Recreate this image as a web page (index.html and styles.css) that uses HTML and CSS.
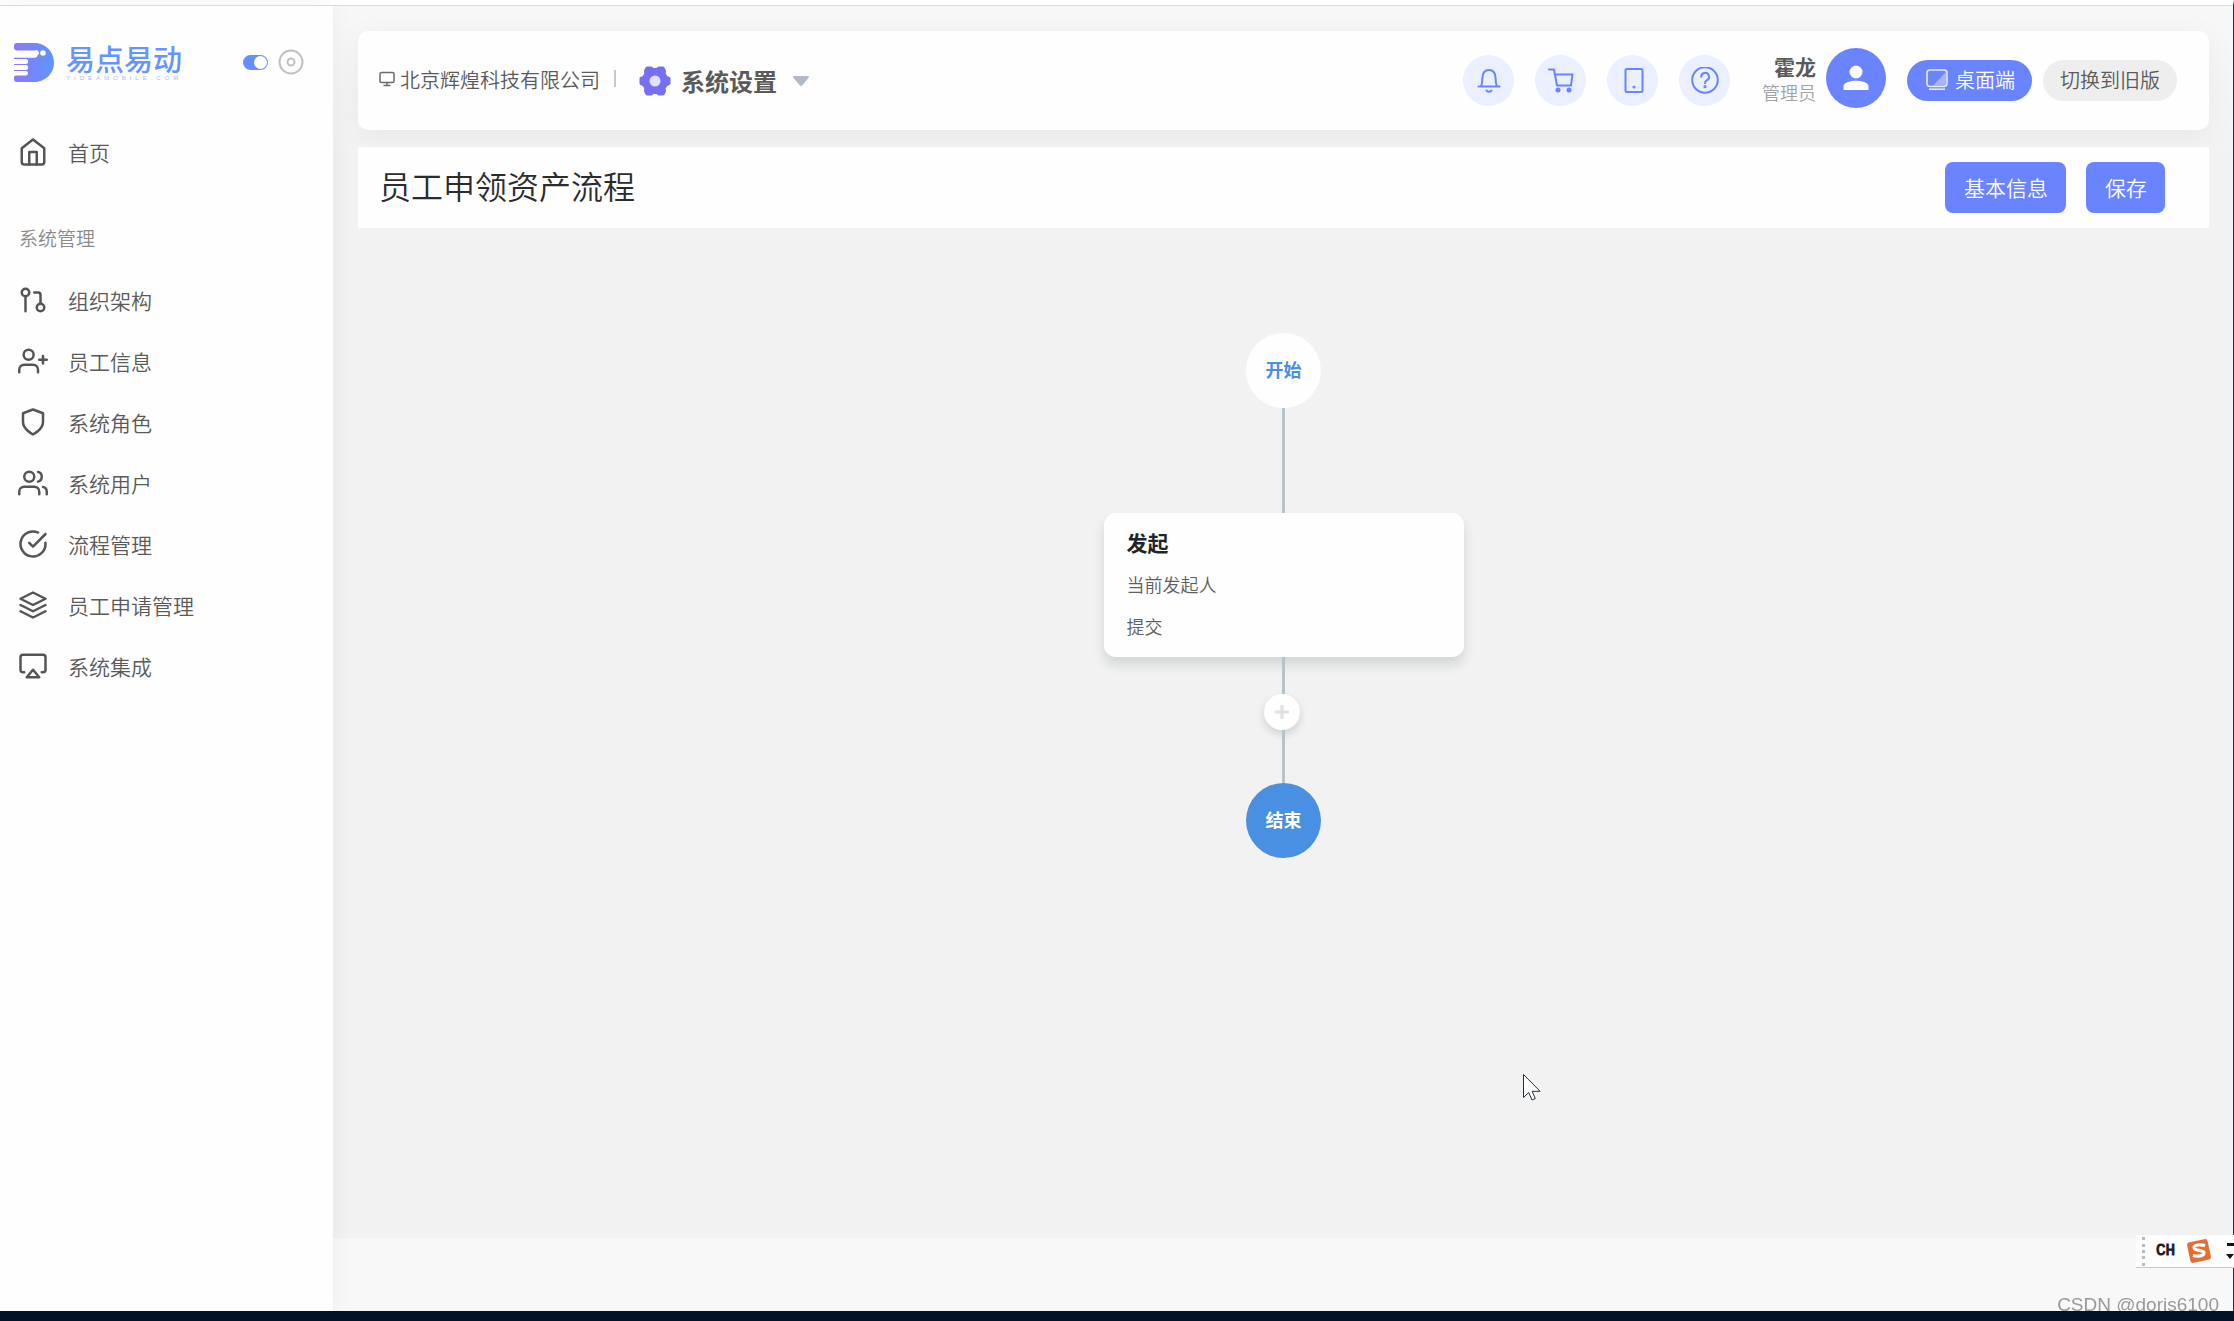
FILE: index.html
```html
<!DOCTYPE html>
<html lang="zh-CN">
<head>
<meta charset="utf-8">
<title>员工申领资产流程</title>
<link rel="stylesheet" href="styles.css">
</head>
<body>
<div class="app">
  <aside class="sidebar">
    <div class="brand">
      <svg class="brand-mark" viewBox="0 0 40 39" aria-hidden="true">
        <defs><linearGradient id="mark" x1="0" x2="1"><stop offset="0" stop-color="#8b78f6"/><stop offset="1" stop-color="#5c96ff"/></linearGradient></defs>
        <path fill="url(#mark)" d="M3 0H20C31 0 40 8 40 19.500S31 39 20 39H3a3 3 0 0 1-3-3v-1.500a2 2 0 0 1 2-2h10a2.500 2.500 0 0 0 2-2.500a2 2 0 0 0-2-2H0v-1h12a2 2 0 0 0 2-2.500a2 2 0 0 0-2-2.500H0v-1h12a2 2 0 0 0 2-2.500a2 2 0 0 0-2-2.500H0v-1.200h21a2.700 2.700 0 0 0 2.500-2.500A2.700 2.700 0 0 0 21 7.500H3A3 3 0 0 1 0 4.500V3a3 3 0 0 1 3-3z"/>
        <circle cx="29" cy="10" r="2.800" fill="#fff"/>
      </svg>
      <div class="brand-text"><span class="brand-name">易点易动</span><span class="brand-url">YIDEAMOBILE.COM</span></div>
      <input class="switch" type="checkbox" checked aria-label="固定菜单">
      <button class="target" aria-label="收起菜单"><svg viewBox="0 0 26 26"><circle cx="13" cy="13" r="11.500"/><circle cx="13" cy="13" r="3.500"/></svg></button>
    </div>
    <nav class="menu">
      <a class="menu-item" href="#"><svg class="icon" viewBox="0 0 24 24"><path d="M3 9l9-7 9 7v11a2 2 0 0 1-2 2H5a2 2 0 0 1-2-2z"/><path d="M9 22V12h6v10"/></svg>首页</a>
      <h2 class="menu-title">系统管理</h2>
      <a class="menu-item" href="#"><svg class="icon" viewBox="0 0 24 24"><circle cx="18" cy="18" r="3"/><circle cx="6" cy="6" r="3"/><path d="M13 6h3a2 2 0 0 1 2 2v7M6 9v12"/></svg>组织架构</a>
      <a class="menu-item" href="#"><svg class="icon" viewBox="0 0 24 24"><path d="M16 21v-2a4 4 0 0 0-4-4H5a4 4 0 0 0-4 4v2"/><circle cx="8.500" cy="7" r="4"/><path d="M20 8v6M23 11h-6"/></svg>员工信息</a>
      <a class="menu-item" href="#"><svg class="icon" viewBox="0 0 24 24"><path d="M12 22s8-4 8-10V5l-8-3-8 3v7c0 6 8 10 8 10z"/></svg>系统角色</a>
      <a class="menu-item" href="#"><svg class="icon" viewBox="0 0 24 24"><path d="M17 21v-2a4 4 0 0 0-4-4H5a4 4 0 0 0-4 4v2"/><circle cx="9" cy="7" r="4"/><path d="M23 21v-2a4 4 0 0 0-3-3.870M16 3.130a4 4 0 0 1 0 7.750"/></svg>系统用户</a>
      <a class="menu-item" href="#"><svg class="icon" viewBox="0 0 24 24"><path d="M22 11.080V12a10 10 0 1 1-5.930-9.140"/><path d="M22 4L12 14.010l-3-3"/></svg>流程管理</a>
      <a class="menu-item" href="#"><svg class="icon" viewBox="0 0 24 24"><path d="M12 2L2 7l10 5 10-5-10-5zM2 17l10 5 10-5M2 12l10 5 10-5"/></svg>员工申请管理</a>
      <a class="menu-item" href="#"><svg class="icon" viewBox="0 0 24 24"><path d="M5 17H4a2 2 0 0 1-2-2V5a2 2 0 0 1 2-2h16a2 2 0 0 1 2 2v10a2 2 0 0 1-2 2h-1"/><path d="M12 15l5 6H7z"/></svg>系统集成</a>
    </nav>
  </aside>

  <main class="main">
    <div class="workspace">
      <header class="topbar">
        <svg class="company-icon" viewBox="0 0 16 16" aria-hidden="true"><rect x="1" y="1.500" width="14" height="10" rx="1.500"/><path d="M8 12v2.500M4.500 14.500h7"/></svg>
        <span class="company">北京辉煌科技有限公司</span>
        <span class="divider"></span>
        <svg class="gear" viewBox="0 0 32 30" aria-hidden="true"><path fill="#7670f1" stroke="#7670f1" stroke-width="3" stroke-linejoin="round" d="M8 2h4l2 1.500h4L20 2h4l1.500 3-.3 3 2 3.300L30 12.500v5l-2.800 1.300-2 3.200.3 3-1.500 3h-4l-2-1.500h-4L12 28H8l-1.500-3 .3-3-2-3.200L2 17.500v-5l2.800-1.200L6.800 8l-.3-3z"/><circle cx="16" cy="15" r="5.500" fill="#dfe2ff"/></svg>
        <select class="module" aria-label="模块"><option>系统设置</option></select>
        <svg class="caret" viewBox="0 0 16 10" aria-hidden="true"><path d="M1.200 0h13.600c1 0 1.500 1 .8 1.800L9.500 9a2 2 0 0 1-3 0L.4 1.800C-.3 1 .2 0 1.200 0z"/></svg>
        <div class="tools">
          <button class="round" aria-label="通知"><svg viewBox="0 0 26 26"><path d="M2.500 18.500h21M5 18.500c1-2 1.400-4.500 1.400-8C6.400 5 9 2 13 2s6.600 3 6.600 8.500c0 3.500.4 6 1.400 8M10.500 22.500c1.500 1.600 3.500 1.600 5 0"/></svg></button>
          <button class="round" aria-label="购物车"><svg viewBox="0 0 26 26"><path d="M1 1.500h5l3 16h14L24.500 6.500H7"/><circle cx="10" cy="22" r="1.500" fill="currentColor"/><circle cx="21" cy="22" r="1.500" fill="currentColor"/></svg></button>
          <button class="round" aria-label="移动端"><svg viewBox="0 0 26 26"><rect x="5.500" y="1" width="17" height="23" rx="1.500"/><circle cx="14" cy="19" r=".6" fill="currentColor"/></svg></button>
          <button class="round" aria-label="帮助"><svg class="help" viewBox="0 0 28 28"><circle cx="14" cy="13" r="12.800"/><path d="M10.200 9.800a3.900 3.900 0 1 1 5.800 3.400c-1.400.8-2 1.400-2 3"/><circle cx="14" cy="19.700" r=".6" fill="currentColor"/></svg></button>
        </div>
        <div class="user"><strong class="user-name">霍龙</strong><span class="user-role">管理员</span></div>
        <button class="avatar" aria-label="个人中心"><svg viewBox="0 0 26 26"><circle cx="13" cy="7" r="6.500"/><path d="M.5 25v-3.500c0-4 7-5.700 12.500-5.700s12.500 1.700 12.500 5.700V25z"/></svg></button>
        <button class="pill pill-primary"><svg viewBox="0 0 22 22" aria-hidden="true"><path fill="#fff" fill-opacity=".4" d="M20 3v13.500H7z"/><rect x="1" y="1" width="20" height="16.500" rx="3" fill="none" stroke="#fff" stroke-opacity=".85" stroke-width="1.600"/><path stroke="#fff" stroke-opacity=".85" stroke-width="1.600" d="M3 20.200h16"/></svg>桌面端</button>
        <button class="pill pill-plain">切换到旧版</button>
      </header>

      <section class="titlebar">
        <h1 class="title">员工申领资产流程</h1>
        <button class="btn">基本信息</button>
        <button class="btn">保存</button>
      </section>

      <section class="flow">
        <div class="node node-start">开始</div>
        <div class="line line-long"></div>
        <article class="step">
          <h3 class="step-title">发起</h3>
          <p class="step-row">当前发起人</p>
          <p class="step-row">提交</p>
        </article>
        <div class="line line-short"></div>
        <button class="add" aria-label="添加节点"><svg viewBox="0 0 16 16"><path d="M8 1v14M1 8h14"/></svg></button>
        <div class="line line-mid"></div>
        <div class="node node-end">结束</div>
      </section>
    </div>
  </main>
</div>

<svg class="pointer" viewBox="0 0 20 28" aria-hidden="true"><path d="M1.500 1.500v23l5.200-5 3.300 7.500 3.300-1.500-3.200-7.200h8z"/></svg>
<div class="ime">
  <span class="ime-grip"></span><span class="ime-lang">CH</span>
  <svg class="ime-logo" viewBox="0 0 26 26" aria-hidden="true"><rect x="2.500" y="2.500" width="21" height="21" rx="3" fill="#e46f33" transform="rotate(-12 13 13)"/><path d="M19 7.500c-5-1.500-11-.5-11 2.300 0 3.200 10 2 10 5.200 0 2.800-6 4-11 2.500" fill="none" stroke="#fff" stroke-width="3.200"/></svg>
  <svg class="ime-more" viewBox="0 0 9 16" aria-hidden="true"><path d="M2 0h7v3H2zM1 11h8l-4 5z"/></svg>
</div>
<div class="watermark">CSDN @doris6100</div>
<div class="taskbar"></div>
</body>
</html>
```
FILE: styles.css
```css
* { box-sizing: border-box; }

body {
  margin: 0;
  font-family: "Noto Sans CJK SC", sans-serif;
  font-weight: 350;
  color: #5a5a5a;
  background: #f8f8f8;
}

button, select {
  margin: 0;
  padding: 0;
  border: 0;
  background: none;
  font: inherit;
  color: inherit;
}

h1, h2, h3, p { margin: 0; font-weight: 350; }

svg { display: block; flex: none; }

.app {
  display: flex;
  min-height: 100vh;
  padding-bottom: 10px;
  border-top: 5px solid #fff;
  border-right: 1px solid #27313f;
}

/* Sidebar */
.sidebar {
  position: relative;
  flex: none;
  width: 333px;
  border-top: 1px solid #dcdcdc;
  background: #fefefe;
  box-shadow: 0 0 24px rgba(0, 0, 0, .05);
}

.brand {
  display: flex;
  align-items: center;
  height: 112px;
  padding-left: 14px;
}
.brand-mark { width: 40px; height: 39px; margin-right: 12px; }
.brand-text { width: 177px; color: #6694ff; }
.brand-name { display: block; font-size: 29px; line-height: 32px; font-weight: 500; }
.brand-url {
  display: block;
  font: 6px/8px "Liberation Sans", sans-serif;
  letter-spacing: 4px;
  color: #a9bbfb;
}

.switch {
  appearance: none;
  width: 25px;
  height: 15px;
  margin: 0;
  padding: 1px;
  border-radius: 8px;
  background: #6490ff;
}
.switch::before {
  content: "";
  display: block;
  width: 13px;
  height: 13px;
  margin-left: 10px;
  border-radius: 50%;
  background: #fff;
}
.target { margin-left: 10px; }
.target svg { width: 26px; height: 26px; fill: none; stroke: #c0c0c2; stroke-width: 2; }

.menu { padding-top: 4px; }
.menu-item {
  display: flex;
  align-items: center;
  gap: 20px;
  height: 61px;
  padding: 0 0 2px 18px;
  font-size: 21px;
  color: #5a5a5a;
  text-decoration: none;
}
.icon {
  width: 30px;
  height: 30px;
  fill: none;
  stroke: #555;
  stroke-width: 2;
  stroke-linecap: round;
  stroke-linejoin: round;
}
.menu-title {
  padding: 40px 19px 17px;
  font-size: 19px;
  line-height: 30px;
  color: #8a8a8a;
}

/* Main column */
.main {
  flex: 1;
  padding-bottom: 73px;
  display: flex;
  border-top: 1px solid #dcdcdc;
}
.workspace {
  flex: 1;
  padding: 25px 24px 0 25px;
  background: linear-gradient(#f8f8f8, #f2f2f2 150px);
}

.topbar {
  display: flex;
  align-items: center;
  height: 99px;
  padding: 0 32px 0 21px;
  border-radius: 10px;
  background: #fefefe;
  box-shadow: 0 6px 32px rgba(0, 0, 0, .05);
}
.company-icon { width: 16px; height: 16px; margin: 0 5px 3px 0; fill: none; stroke: #6b6b6b; stroke-width: 1.500; }
.company { padding-bottom: 2px; font-size: 20px; }
.divider { width: 2px; height: 17px; margin: 0 23px 4px 14px; background: #c8c8cc; }
.gear { width: 32px; height: 30px; margin-right: 10px; }
.module { appearance: none; font-size: 24px; font-weight: 700; line-height: 36px; }
.caret { width: 16px; height: 10px; margin-left: 16px; fill: #b2bac6; }

.tools { display: flex; gap: 21px; margin-left: auto; }
.round {
  display: grid;
  place-items: center;
  width: 51px;
  height: 51px;
  border-radius: 50%;
  background: #eaf0ff;
  color: #6a83ff;
}
.round svg {
  width: 26px;
  height: 26px;
  fill: none;
  stroke: currentColor;
  stroke-width: 2;
  stroke-linecap: round;
  stroke-linejoin: round;
}
.round .help { width: 28px; height: 28px; }

.user { width: 86px; padding-bottom: 3px; text-align: right; }
.user-name { display: block; font-size: 21px; line-height: 26px; font-weight: 700; }
.user-role { display: block; font-size: 18px; line-height: 26px; color: #a2a2a2; }
.avatar {
  display: grid;
  place-items: center;
  width: 60px;
  height: 60px;
  margin: 0 21px 5px 10px;
  border-radius: 50%;
  background: #6a83ff;
}
.avatar svg { width: 26px; height: 26px; fill: #fff; }

.pill {
  display: flex;
  align-items: center;
  gap: 7px;
  height: 41px;
  border-radius: 21px;
  font-size: 20px;
  line-height: 30px;
}
.pill svg { width: 22px; height: 22px; }
.pill-primary { padding: 0 17px 1px 19px; background: #6a83ff; color: #fff; }
.pill-plain { margin-left: 11px; padding: 0 17px 1px; background: #eee; }

.titlebar {
  display: flex;
  align-items: center;
  gap: 20px;
  height: 81px;
  margin-top: 17px;
  padding: 0 44px 0 21px;
  background: #fefefe;
}
.title { flex: 1; padding-bottom: 6px; font-size: 32px; line-height: 48px; color: #2c2c2c; }
.btn {
  height: 51px;
  padding: 0 18px 2px 19px;
  border-radius: 8px;
  background: #6a83ff;
  color: #fff;
  font-size: 21px;
}

/* Approval flow */
.flow {
  display: flex;
  flex-direction: column;
  align-items: center;
  padding: 105px 0;
}
.node {
  display: grid;
  place-items: center;
  width: 75px;
  height: 75px;
  padding-bottom: 3px;
  border-radius: 50%;
  font-size: 18px;
  font-weight: 700;
}
.node-start { background: #fefefe; color: #4a90e2; }
.node-end { background: #4a90e2; color: #fff; }

.line { width: 3px; background: #b7c3ca; }
.line-long { height: 105px; }
.line-short { height: 37px; }
.line-mid { height: 53px; }

.step {
  width: 360px;
  height: 144px;
  padding: 8px 23px;
  border-radius: 12px;
  background: #fefefe;
  box-shadow: 0 8px 12px rgba(30, 40, 50, .14);
}
.step-title { font-size: 21px; font-weight: 700; line-height: 42px; color: #1f262b; }
.step-row { font-size: 18px; line-height: 42px; color: #5f5f5f; }

.add {
  display: grid;
  place-items: center;
  width: 36px;
  height: 36px;
  margin-right: 3px;
  border-radius: 50%;
  background: #fefefe;
  box-shadow: 0 4px 8px rgba(0, 0, 0, .14);
}
.add svg { width: 16px; height: 16px; stroke: #dfe0e4; stroke-width: 3; }

/* Desktop overlays */
.pointer {
  position: fixed;
  left: 1522px;
  top: 1073px;
  width: 20px;
  height: 28px;
  fill: #fff;
  stroke: #222c3a;
}
.ime {
  position: fixed;
  right: 0;
  bottom: 53px;
  display: flex;
  align-items: center;
  width: 98px;
  height: 33px;
  padding-left: 6px;
  border-bottom: 1px solid #c8c8c8;
  background: #fefefe;
}
.ime-grip { width: 3px; height: 29px; border-left: 3px dotted #bbb; }
.ime-lang { margin-left: 11px; font: 16px "Liberation Mono", monospace; color: #161c2c; -webkit-text-stroke: 1px #161c2c; }
.ime-logo { width: 26px; height: 26px; margin-left: 11px; }
.ime-more { width: 9px; height: 16px; margin-left: auto; fill: #10131c; }
.watermark {
  position: fixed;
  right: 15px;
  bottom: 5px;
  font: 19px/22px "Liberation Sans", sans-serif;
  color: #999;
}
.taskbar {
  position: fixed;
  inset: auto 0 0;
  height: 10px;
  background: #021029;
}
```
